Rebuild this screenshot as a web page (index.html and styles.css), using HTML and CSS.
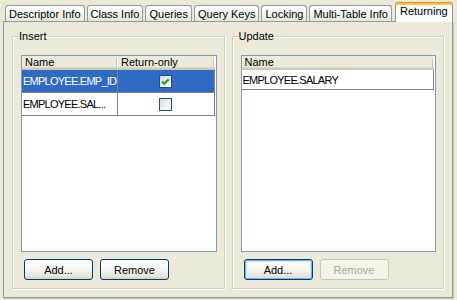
FILE: index.html
```html
<!DOCTYPE html>
<html lang="en">
<head>
    <meta charset="UTF-8">
    <title>Returning</title>
    <link rel="stylesheet" href="styles.css">
</head>
<body>
    <div class="tabs">
        <div class="tab">Descriptor Info</div>
        <div class="tab">Class Info</div>
        <div class="tab">Queries</div>
        <div class="tab">Query Keys</div>
        <div class="tab">Locking</div>
        <div class="tab">Multi-Table Info</div>
        <div class="tab active">Returning</div>
    </div>

    <div class="panel">
        <fieldset class="group">
            <legend>Insert</legend>
            <div class="grid">
                <div class="grid-head">
                    <div class="head-cell col-name">Name</div>
                    <div class="head-cell col-flag">Return-only</div>
                </div>
                <div class="row selected">
                    <div class="cell col-name">EMPLOYEE.EMP_ID</div>
                    <div class="cell col-flag">
                        <span class="check">
                            <svg width="11" height="11" viewBox="0 0 11 11"><path d="M2 5.5 L4.3 7.8 L8.8 3.2" fill="none" stroke="#21A121" stroke-width="2"/></svg>
                        </span>
                    </div>
                </div>
                <div class="row">
                    <div class="cell col-name">EMPLOYEE.SAL...</div>
                    <div class="cell col-flag"><span class="check"></span></div>
                </div>
            </div>
            <div class="actions">
                <button>Add...</button>
                <button>Remove</button>
            </div>
        </fieldset>

        <fieldset class="group">
            <legend>Update</legend>
            <div class="grid">
                <div class="grid-head">
                    <div class="head-cell col-full">Name</div>
                </div>
                <div class="row short">
                    <div class="cell col-full">EMPLOYEE.SALARY</div>
                </div>
            </div>
            <div class="actions">
                <button class="focused">Add...</button>
                <button disabled>Remove</button>
            </div>
        </fieldset>
    </div>
</body>
</html>
```

FILE: styles.css
```css
body {
    margin: 0;
    width: 457px;
    height: 300px;
    padding: 2px 4px 2px 3px;
    box-sizing: border-box;
    background-color: #ece9d8;
    color: #000;
    font-family: "Liberation Sans", Arial, sans-serif;
    font-size: 11px;
    display: flex;
    flex-direction: column;
    overflow: hidden;
}

/* tab strip */

.tabs {
    display: flex;
    align-items: flex-end;
    gap: 2px;
    height: 19px;
    padding-left: 2px;
}

.tab {
    height: 16px;
    padding: 1px 3px 0;
    box-sizing: border-box;
    line-height: 14px;
    white-space: nowrap;
    border: 1px solid #919b9c;
    border-bottom: none;
    border-radius: 3px 3px 0 0;
    background: linear-gradient(#ffffff, #f3f3ef 60%, #e6e4dc);
}

.tab.active {
    position: relative;
    z-index: 1;
    height: 20px;
    margin: 0 0 -1px 1px;
    padding: 2px 4px 0;
    line-height: 13px;
    border-top: 1px solid #e68b2c;
    box-shadow: inset 0 2px 0 #ffc73c;
    background: #fcfcfe;
}

/* panel */

.panel {
    flex: 1;
    display: flex;
    gap: 7px;
    padding: 8px;
    border: 1px solid #919b9c;
    box-shadow: 1px 1px 0 #c9c6b5;
    min-height: 0;
}

.group {
    flex: 1;
    min-width: 0;
    margin: 0;
    padding: 12px 7px 8px 8px;
    border: 1px solid #d0d0bf;
    box-shadow: 1px 1px 0 #fff, inset 1px 1px 0 #fff;
    display: flex;
    flex-direction: column;
}

.group legend {
    margin-left: -3px;
    padding: 0 1px;
    line-height: 13px;
}

/* tables */

.grid {
    flex: 1;
    border: 1px solid #7f9db9;
    background: #fff;
    padding-right: 1px;
}

.grid-head {
    display: flex;
    height: 14px;
    background: linear-gradient(#ebeadb 0, #ebeadb 11px, #e2decd 11px, #d6d2c2 12px, #cbc7b8 13px);
}

.head-cell {
    position: relative;
    padding-left: 3px;
    line-height: 13px;
    box-sizing: border-box;
}

.head-cell::after {
    content: "";
    position: absolute;
    right: 1px;
    top: 2px;
    bottom: 3px;
    width: 1px;
    background: #c7c5b2;
    box-shadow: 1px 0 0 #fff;
}

.col-name {
    width: 96px;
    flex: none;
}

.col-flag,
.col-full {
    flex: 1;
}

.row {
    display: flex;
    height: 23px;
}

.row.short {
    height: 20px;
}

.cell {
    display: flex;
    align-items: center;
    padding: 0 1px;
    box-sizing: border-box;
    white-space: nowrap;
    overflow: hidden;
    letter-spacing: -0.75px;
    border-right: 1px solid #808080;
    border-bottom: 1px solid #808080;
}

.cell.col-flag {
    justify-content: center;
}

.row.selected .cell {
    background: #316ac5;
    color: #fff;
}

.check {
    width: 13px;
    height: 13px;
    box-sizing: border-box;
    border: 1px solid #1c5180;
    background: linear-gradient(135deg, #dcdcd7, #ffffff);
    display: flex;
}

/* buttons */

.actions {
    display: flex;
    gap: 7px;
    margin-top: 7px;
    padding-left: 3px;
}

button {
    width: 69px;
    height: 21px;
    padding: 0;
    font-family: inherit;
    font-size: 11px;
    color: #000;
    border: 1px solid #003c74;
    border-radius: 3px;
    background: linear-gradient(#ffffff, #f4f4f0 55%, #e6e5dd 85%, #d6d0c5);
}

button.focused {
    box-shadow: inset 0 0 0 1px #89ade4, inset 0 0 0 2px #cee7ff;
}

button:disabled {
    color: #aca899;
    border-color: #c9c7ba;
    background: #f5f4ea;
}
```
